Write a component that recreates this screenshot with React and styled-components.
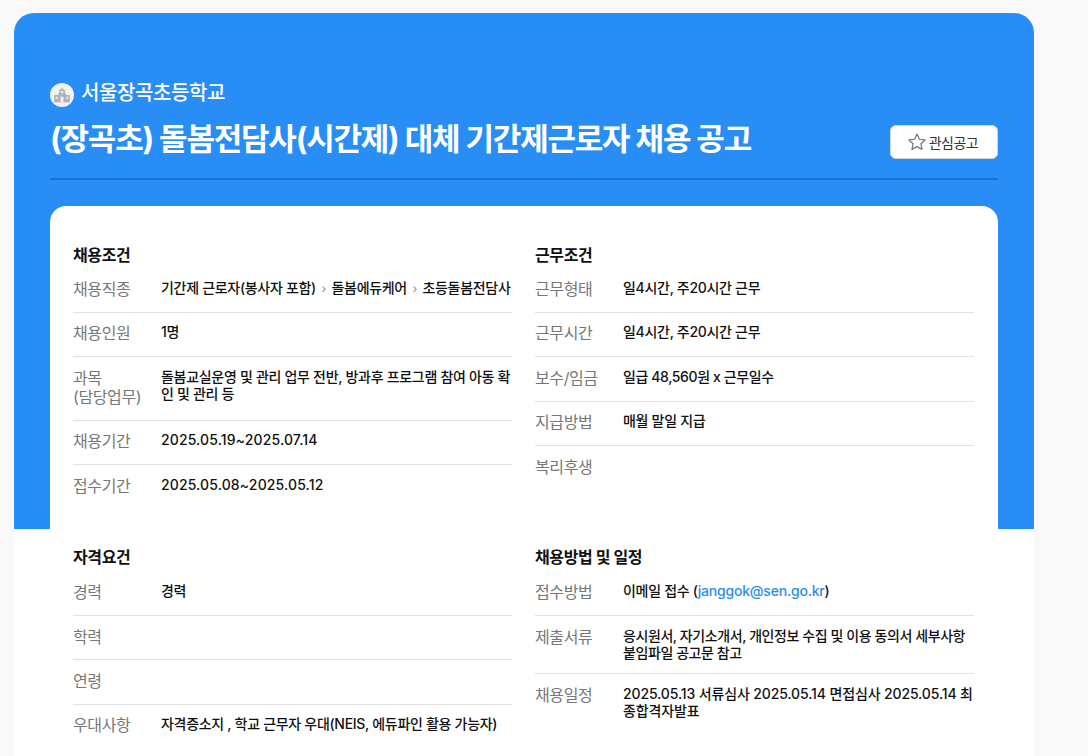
import React from "react";
import styled, { createGlobalStyle } from "styled-components";

const GlobalStyle = createGlobalStyle`
  html, body {
    margin: 0;
    padding: 0;
    height: 756px;
    overflow: hidden;
    background: #f9f9f9;
    font-family: Inter, "Noto Sans CJK KR", "Noto Sans", sans-serif;
  }
`;

const Page = styled.div`
  padding: 13px 54px 0 14px;
`;

const Wrapper = styled.div`
  box-sizing: border-box;
  min-height: 743px;
  padding: 0 36px;
  border-radius: 20px 20px 0 0;
  background: linear-gradient(#288ef5 516px, #fff 516px);
`;

const Header = styled.header`
  height: 167px;
  box-sizing: border-box;
  padding-top: 68px;
  border-bottom: 2px solid #1575d6;
  display: flex;
  justify-content: space-between;
`;

const Titles = styled.div`
  display: flex;
  flex-direction: column;
`;

const School = styled.div`
  display: flex;
  align-items: flex-start;
  gap: 7px;
  height: 26px;
  color: #fff;
  font-size: 20px;
  line-height: 24px;
  font-weight: 500;
  letter-spacing: -0.4px;
`;

const SchoolIcon = styled.span`
  width: 24px;
  height: 24px;
  margin-top: 2px;
  border-radius: 50%;
  background: #f0f1f3;
  display: flex;
  align-items: center;
  justify-content: center;
`;

const Title = styled.h1`
  margin: 12px 0 0;
  color: #fff;
  font-size: 31px;
  line-height: 40px;
  font-weight: 700;
  letter-spacing: -1.2px;
  white-space: nowrap;
`;

const FavButton = styled.button`
  align-self: flex-start;
  margin-top: 44px;
  width: 108px;
  height: 34px;
  display: flex;
  align-items: center;
  justify-content: center;
  gap: 2px;
  padding: 0 3px 0 0;
  border: 1px solid #d8d8d8;
  border-radius: 6px;
  background: #fff;
  color: #333;
  font-family: inherit;
  font-size: 14px;
  letter-spacing: -0.5px;
`;

const Card = styled.div`
  margin-top: 26px;
  padding: 37px 24px 0 23px;
  border-radius: 16px 16px 0 0;
  background: #fff;
  display: grid;
  grid-template-columns: 439px 439px;
  column-gap: 23px;
  row-gap: 35px;
`;

const Section = styled.section``;

const SectionTitle = styled.h2`
  margin: 0 0 ${({ $gap }) => $gap}px;
  color: #111;
  font-size: 16px;
  line-height: 24px;
  font-weight: 700;
  letter-spacing: -0.4px;
`;

const Row = styled.div`
  display: flex;
  padding: 10.5px 0 12.7px;
  border-bottom: 1px solid ${({ $last }) => ($last ? "transparent" : "#e2e2e2")};
`;

const Label = styled.div`
  flex: 0 0 88px;
  padding-top: 1px;
  color: #777;
  font-size: 16px;
  line-height: 19.2px;
  letter-spacing: -0.4px;
`;

const Value = styled.div`
  flex: 1;
  margin-bottom: -0.2px;
  color: #111;
  font-size: 14px;
  line-height: 17px;
  font-weight: 500;
  letter-spacing: -0.3px;
`;

const Mail = styled.span`
  color: #288ef5;
  letter-spacing: -0.2px;
`;

const Spaced = styled.span`
  letter-spacing: ${({ $spacing }) => $spacing}px;
`;

const Path = styled.span`
  white-space: nowrap;
`;

const Arrow = styled.span`
  color: #999;
  font-size: 12px;
  margin: 0 5.5px;
`;

const data = [
  {
    title: "채용조건",
    gap: 1.5,
    rows: [
      ["채용직종", <Path>기간제 근로자(봉사자 포함)<Arrow>›</Arrow>돌봄에듀케어<Arrow>›</Arrow>초등돌봄전담사</Path>],
      ["채용인원", "1명"],
      [<>과목<br />(담당업무)</>, "돌봄교실운영 및 관리 업무 전반, 방과후 프로그램 참여 아동 확인 및 관리 등"],
      ["채용기간", <Spaced $spacing={0.13}>2025.05.19~2025.07.14</Spaced>],
      ["접수기간", <Spaced $spacing={0.13}>2025.05.08~2025.05.12</Spaced>],
    ],
  },
  {
    title: "근무조건",
    gap: 1.5,
    rows: [
      ["근무형태", "일4시간, 주20시간 근무"],
      ["근무시간", "일4시간, 주20시간 근무"],
      ["보수/임금", <Spaced $spacing={-0.4}>일급 48,560원 x 근무일수</Spaced>],
      ["지급방법", "매월 말일 지급"],
      ["복리후생", ""],
    ],
  },
  {
    title: "자격요건",
    gap: 3,
    rows: [
      ["경력", "경력"],
      ["학력", ""],
      ["연령", ""],
      ["우대사항", "자격증소지 , 학교 근무자 우대(NEIS, 에듀파인 활용 가능자)"],
    ],
  },
  {
    title: "채용방법 및 일정",
    gap: 3,
    rows: [
      ["접수방법", <>이메일 접수 (<Mail>janggok@sen.go.kr</Mail>)</>],
      ["제출서류", <Spaced $spacing={-0.42}>응시원서, 자기소개서, 개인정보 수집 및 이용 동의서 세부사항 붙임파일 공고문 참고</Spaced>],
      ["채용일정", <Spaced $spacing={-0.13}>2025.05.13 서류심사 2025.05.14 면접심사 2025.05.14 최종합격자발표</Spaced>],
    ],
  },
];

export default function App() {
  return (
    <Page>
      <GlobalStyle />
      <Wrapper>
        <Header>
          <Titles>
            <School>
              <SchoolIcon>
                <svg width="18" height="18" viewBox="0 0 16 16">
                  <path fill="#aeb3ba" d="M7.500 1.500h1v1.200l2 .9V6l1 .9V8H15v6.500H1V8h3.500V6.900L5.500 6V3.600l2-.9z" />
                  <path fill="#f0f1f3" d="M7 4.500h2v2H7zM2.500 9.500h1.500v2H2.500zM12 9.500h1.500v2H12zM6.700 9.500h2.600v5H6.700z" />
                </svg>
              </SchoolIcon>
              서울장곡초등학교
            </School>
            <Title>(장곡초) 돌봄전담사(시간제) 대체 기간제근로자 채용 공고</Title>
          </Titles>
          <FavButton>
            <svg width="20" height="20" viewBox="0 0 24 24" fill="none" stroke="#777" strokeWidth="1.5" strokeLinejoin="round">
              <path d="M12 2.500l2.900 6.200 6.800.8-5 4.600 1.300 6.700-6-3.300-6 3.300 1.300-6.700-5-4.600 6.800-.8z" />
            </svg>
            관심공고
          </FavButton>
        </Header>
        <Card>
          {data.map((section) => (
            <Section key={section.title}>
              <SectionTitle $gap={section.gap}>{section.title}</SectionTitle>
              {section.rows.map((row, i) => (
                <Row key={i} $last={i === section.rows.length - 1}>
                  <Label>{row[0]}</Label>
                  <Value>{row[1]}</Value>
                </Row>
              ))}
            </Section>
          ))}
        </Card>
      </Wrapper>
    </Page>
  );
}
